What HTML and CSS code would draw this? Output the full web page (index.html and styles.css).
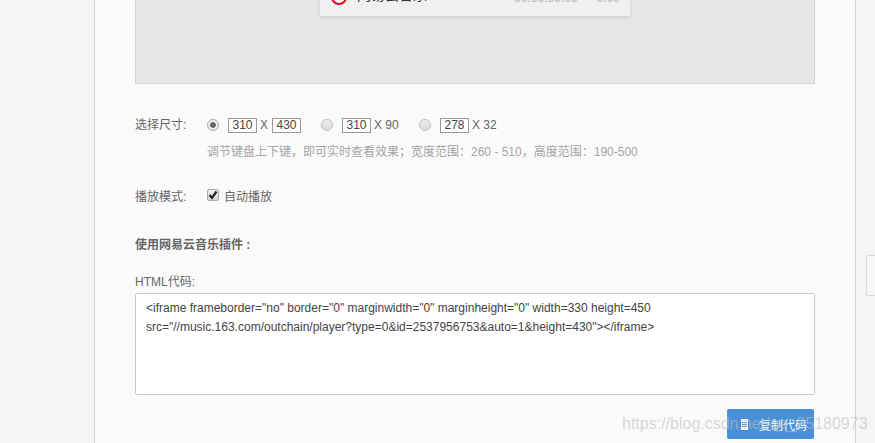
FILE: index.html
```html
<!DOCTYPE html>
<html lang="zh-CN">
  <head>
    <meta charset="utf-8" />
    <title>生成外链播放器</title>
    <link rel="stylesheet" href="styles.css">
  </head>
  <body>
    <!-- Main column -->
    <div class="main">
      <!-- Preview area, scrolled so only its bottom shows -->
      <div class="preview">
        <div class="player">
          <div class="player-row">
            <svg class="player-logo" width="16" height="16" viewBox="0 0 16 16">
              <circle cx="8" cy="8" r="7" fill="#fff" stroke="#e60026" stroke-width="2"/>
            </svg>
            <span class="player-name">网易云音乐</span>
            <span class="player-time">00:00:00:00</span>
            <span class="player-length">0:00</span>
          </div>
        </div>
      </div>

      <!-- Size options -->
      <div class="row size-row">
        <div class="row-label">选择尺寸:</div>
        <div class="options">
          <span class="option wide">
            <span class="radio checked"></span>
            <span class="num">310</span> X <span class="num">430</span>
          </span>
          <span class="option mid">
            <span class="radio"></span>
            <span class="num">310</span> X 90
          </span>
          <span class="option">
            <span class="radio"></span>
            <span class="num">278</span> X 32
          </span>
        </div>
      </div>
      <p class="hint">调节键盘上下键，即可实时查看效果；宽度范围：260 - 510，高度范围：190-500</p>

      <!-- Play mode -->
      <div class="row mode-row">
        <div class="row-label">播放模式:</div>
        <label class="auto">
          <span class="checkbox">
            <svg width="10" height="10" viewBox="0 0 10 10">
              <path d="M1.5 5 L4 8 L8.5 1.5" fill="none" stroke="#222" stroke-width="2.2"/>
            </svg>
          </span>
          自动播放
        </label>
      </div>

      <h3 class="plugin-title">使用网易云音乐插件 :</h3>

      <!-- Code -->
      <div class="code-label">HTML代码:</div>
      <div class="code-box">&lt;iframe frameborder="no" border="0" marginwidth="0" marginheight="0" width=330 height=450<br>src="//music.163.com/outchain/player?type=0&amp;id=2537956753&amp;auto=1&amp;height=430"&gt;&lt;/iframe&gt;</div>

      <div class="actions">
        <button type="button" class="copy-btn">
          <svg width="7" height="11" viewBox="0 0 7 11">
            <rect width="7" height="11" fill="#fff"/>
            <path d="M1 3.5H6M1 5.5H6M1 7.5H6" stroke="#4a90d9" stroke-width="1"/>
          </svg>
          复制代码
        </button>
      </div>
    </div>

    <!-- Side feedback tab -->
    <div class="side-tab"></div>

    <!-- Blog watermark -->
    <div class="watermark">https://blog.csdn.net/qq_35180973</div>
  </body>
</html>
```

FILE: styles.css
```css
/* Page */
body {
  margin: 0;
  height: 443px;
  overflow: hidden;
  background: #f5f5f5;
  font-family: "Liberation Sans", "Noto Sans CJK SC", sans-serif;
  font-size: 12px;
  color: #666;
}

/* Main column */
.main {
  box-sizing: border-box;
  width: 762px;
  height: 443px;
  margin-left: 94px;
  padding: 0 40px;
  background: #fafafa;
  border-left: 1px solid #d3d3d3;
  border-right: 1px solid #d3d3d3;
}

/* Preview */
.preview {
  box-sizing: border-box;
  height: 84px;
  background: #e6e6e6;
  border: 1px solid #d3d3d3;
  border-top: none;
  display: flex;
  justify-content: center;
  align-items: flex-start;
}
.player {
  width: 310px;
  height: 16px;
  background: #f0f0f0;
  box-shadow: 0 1px 4px rgba(0,0,0,0.12);
  overflow: hidden;
  display: flex;
  align-items: flex-end;
}
.player-row {
  display: flex;
  align-items: center;
  width: 100%;
  height: 24px;
  flex-shrink: 0;
  margin-bottom: 7px;
  padding: 0 10px 0 11px;
  box-sizing: border-box;
}
.player-logo {
  margin-right: 10px;
}
.player-name {
  margin-bottom: 7px;
  font-size: 14px;
  color: #333;
}
.player-time {
  margin-left: auto;
  margin-top: 2px;
  color: #aaa;
}
.player-length {
  margin-left: 19px;
  margin-top: 2px;
  color: #aaa;
}

/* Form rows */
.row {
  display: flex;
}
.row-label {
  width: 72px;
  line-height: 18px;
}
.size-row {
  margin-top: 32px;
  line-height: 18px;
}
.options {
  display: flex;
  align-items: center;
}
.option {
  display: flex;
  align-items: center;
  gap: 3px;
}
.option.wide {
  width: 114px;
}
.option.mid {
  width: 98px;
}
.radio {
  box-sizing: border-box;
  width: 12px;
  height: 12px;
  margin-right: 6px;
  border: 1px solid #bdbdbd;
  border-radius: 50%;
  background: linear-gradient(#eee, #dcdcdc);
}
.radio.checked {
  background: radial-gradient(circle, #666 0 2.5px, #eee 3.2px);
  border-color: #aaa;
}
.num {
  box-sizing: border-box;
  width: 29px;
  height: 15px;
  line-height: 13px;
  border: 1px solid #999;
  background: #fff;
  color: #444;
  text-align: center;
}
.option.wide .num:last-child {
  margin-left: 1px;
}
.hint {
  margin: 10px 0 0 72px;
  line-height: 16px;
  color: #a5a5a5;
}
.mode-row {
  margin-top: 28px;
  line-height: 18px;
}
.auto {
  display: flex;
  align-items: center;
  gap: 5px;
}
.checkbox {
  box-sizing: border-box;
  width: 12px;
  height: 12px;
  margin-top: -5px;
  display: flex;
  align-items: center;
  justify-content: center;
  border: 1px solid #aaa;
  border-radius: 2px;
  background: linear-gradient(#eee, #d8d8d8);
}
.plugin-title {
  margin: 30px 0 0;
  font-size: 12px;
  line-height: 18px;
  font-weight: bold;
}
.code-label {
  margin-top: 19px;
  line-height: 18px;
}
.code-box {
  box-sizing: border-box;
  height: 102px;
  margin-top: 2px;
  padding: 5px 10px;
  background: #fff;
  border: 1px solid #c9c9c9;
  border-radius: 2px;
  line-height: 19px;
  color: #444;
}

/* Copy button */
.actions {
  display: flex;
  justify-content: flex-end;
  margin-top: 14px;
  margin-right: 1px;
}
.copy-btn {
  display: flex;
  align-items: center;
  gap: 11px;
  width: 87px;
  height: 30px;
  padding: 0 0 0 14px;
  border: none;
  border-radius: 2px;
  background: #4a90d9;
  color: #fff;
  font: inherit;
  cursor: pointer;
}

/* Feedback tab at the right edge */
.side-tab {
  position: absolute;
  top: 255px;
  left: 866px;
  width: 12px;
  height: 41px;
  box-sizing: border-box;
  background: #f7f7f7;
  border: 1px solid #d8d8d8;
  border-radius: 2px;
}

/* Watermark over the page */
.watermark {
  position: absolute;
  top: 414px;
  left: 622px;
  font-size: 16px;
  line-height: 20px;
  color: rgba(190,190,190,0.6);
  pointer-events: none;
}
```
